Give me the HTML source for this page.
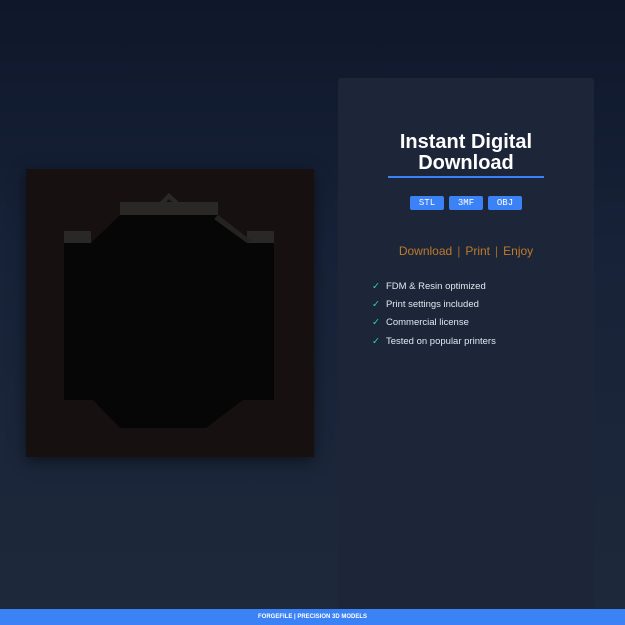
<!DOCTYPE html><html><head><style>
*{margin:0;padding:0;box-sizing:border-box}
body{width:625px;height:625px;overflow:hidden;background:linear-gradient(180deg,#0f172a 0%,#172238 40%,#1e293b 100%);font-family:"Liberation Sans",sans-serif;position:relative}
.panel{position:absolute;left:338px;top:78px;width:256px;height:531px;background:#1c2638;border-radius:3px}
.img{position:absolute;left:26px;top:169px;width:288px;height:288px;background:#171011;box-shadow:0 4px 14px rgba(0,0,0,.5)}
h1{position:absolute;left:338px;width:256px;top:132px;text-align:center;color:#fff;font-size:20px;line-height:21px;font-weight:bold}
.line{position:absolute;left:388px;top:176px;width:156px;height:2px;background:#3b82f6}
.b{position:absolute;top:196px;width:34px;height:14px;background:#3b82f6;border-radius:2px;color:#fff;font-family:"Liberation Mono",monospace;font-size:9px;line-height:14px;text-align:center}
.dl{position:absolute;left:338px;width:256px;top:244px;text-align:center;color:#c07a2a;font-size:12px}
.dl span{color:#a06a2a;margin:0 5px}
ul{position:absolute;left:372px;top:281px;list-style:none;color:#e2e8f0;font-size:9.5px}
li{height:18.2px;line-height:12px}
li b{color:#2dd4bf;font-weight:normal;margin-right:6px}
.f{position:absolute;left:0;top:609px;width:625px;height:16px;background:#3b82f6;color:#fff;font-size:6px;font-weight:bold;text-align:center;line-height:16px}
</style></head><body>
<div class="panel"></div>
<div class="img">
<svg width="288" height="288" viewBox="0 0 288 288">
<polygon points="38,74 65,74 94,46 192,46 221,74 248,74 248,231 217,231 180,259 94,259 67,231 38,231" fill="#060606"/>
<rect x="38" y="62" width="27" height="12" fill="#2a2727"/>
<rect x="221" y="62" width="27" height="12" fill="#2a2727"/>
<rect x="94" y="33" width="98" height="13" fill="#2a2727"/>
<polygon points="122,45 143,24 166,45 159,45 143,30 129,45" fill="#2a2727"/>
<polygon points="192,46 226,72 221,74 188,50" fill="#252222"/>
</svg></div>
<h1>Instant Digital<br>Download</h1>
<div class="line"></div>
<div class="b" style="left:410px">STL</div>
<div class="b" style="left:449px">3MF</div>
<div class="b" style="left:488px">OBJ</div>
<div class="dl">Download<span>|</span>Print<span>|</span>Enjoy</div>
<ul><li><b>✓</b>FDM &amp; Resin optimized</li><li><b>✓</b>Print settings included</li><li><b>✓</b>Commercial license</li><li><b>✓</b>Tested on popular printers</li></ul>
<div class="f">FORGEFILE | PRECISION 3D MODELS</div>
</body></html>
